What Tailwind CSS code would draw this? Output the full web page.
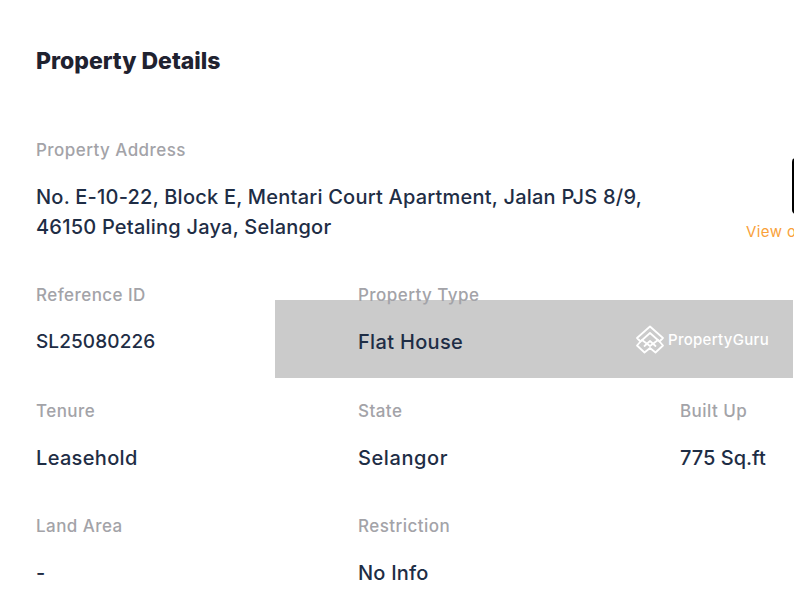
<!DOCTYPE html>
<html lang="en">
<head>
    <meta charset="UTF-8">
    <meta name="viewport" content="width=device-width, initial-scale=1.0">
    <title>Property Details</title>
    <script src="https://cdn.jsdelivr.net/npm/@tailwindcss/browser@4"></script>
</head>
<body class="bg-white h-[600px] overflow-hidden font-['Inter',sans-serif]">
    <div class="relative w-[794px] h-[600px] overflow-hidden pl-9 pt-[46px]">
        <h2 class="text-[23px] leading-[30px] font-extrabold text-[#1f2230] tracking-[0px]">Property Details</h2>

        <div class="flex mt-[59px] h-[145px]">
            <div class="w-[700px] shrink-0">
                <p class="text-[17px] leading-[30px] font-medium text-[#a3a3a8] tracking-[0.45px]">Property Address</p>
                <p class="mt-[17px] text-[20px] leading-[30px] font-medium text-[#1e2d45] tracking-[0.22px]">No. E-10-22, Block E, Mentari Court Apartment, Jalan PJS 8/9,<br>46150 Petaling Jaya, Selangor</p>
            </div>
            <div class="shrink-0 relative">
                <div class="absolute left-[56px] top-[23px] w-[4px] h-[56px] bg-black rounded-l-sm"></div>
                <p class="absolute left-[10px] top-[82px] whitespace-nowrap text-[15px] leading-[30px] text-[#f9a13a] tracking-[0.4px]">View on map</p>
            </div>
        </div>

        <div class="grid grid-cols-[322px_322px_322px] gap-y-[38.5px]">
            <div>
                <p class="text-[17px] leading-[30px] font-medium text-[#a3a3a8] tracking-[0.45px]">Reference ID</p>
                <p class="mt-[17px] text-[19px] leading-[30px] font-medium text-[#1e2d45] tracking-[0.1px]">SL25080226</p>
            </div>
            <div>
                <p class="relative z-10 text-[17px] leading-[30px] font-medium text-[#a3a3a8] tracking-[0.45px]">Property Type</p>
                <p class="relative z-10 mt-[17px] text-[20px] leading-[30px] font-medium text-[#1e2d45] tracking-[0.33px]">Flat House</p>
            </div>
            <div></div>
            <div>
                <p class="text-[17px] leading-[30px] font-medium text-[#a3a3a8] tracking-[0.45px]">Tenure</p>
                <p class="mt-[17px] text-[20px] leading-[30px] font-medium text-[#1e2d45] tracking-[0.33px]">Leasehold</p>
            </div>
            <div>
                <p class="text-[17px] leading-[30px] font-medium text-[#a3a3a8] tracking-[0.45px]">State</p>
                <p class="mt-[17px] text-[20px] leading-[30px] font-medium text-[#1e2d45] tracking-[0.6px]">Selangor</p>
            </div>
            <div>
                <p class="text-[17px] leading-[30px] font-medium text-[#a3a3a8] tracking-[0.45px]">Built Up</p>
                <p class="mt-[17px] text-[20px] leading-[30px] font-medium text-[#1e2d45]">775 Sq.ft</p>
            </div>
            <div>
                <p class="text-[17px] leading-[30px] font-medium text-[#a3a3a8] tracking-[0.45px]">Land Area</p>
                <p class="mt-[17px] text-[20px] leading-[30px] font-medium text-[#1e2d45] tracking-[0.33px]">-</p>
            </div>
            <div>
                <p class="text-[17px] leading-[30px] font-medium text-[#a3a3a8] tracking-[0.45px]">Restriction</p>
                <p class="mt-[17px] text-[20px] leading-[30px] font-medium text-[#1e2d45] tracking-[0.2px]">No Info</p>
            </div>
        </div>

        <!-- watermark sits over the grid -->
        <div class="absolute left-[275px] top-[300px] w-[518px] h-[78px] bg-[#cbcbcb] flex items-center justify-end pr-[24px] gap-[3px] pt-[2px]">
            <svg width="30" height="30" viewBox="0 0 30 30" fill="none" stroke="#fff" stroke-width="1.8" stroke-linejoin="round" stroke-linecap="round">
                <path d="M15 1.5 L28 13 L24.5 16.5 L28 20.5 L20.5 27.5 L15 23 L9.5 27.5 L2 20.5 L5.5 16.5 L2 13 Z"/>
                <path d="M5.5 16.5 L15 8 L24.5 16.5"/>
                <path d="M9.5 21 L15 16 L20.5 21"/>
                <path d="M7 15 L15 21 L23 15"/>
            </svg>
            <span class="text-[15px] font-medium text-white tracking-[0.3px]">PropertyGuru</span>
        </div>
    </div>
</body>
</html>
